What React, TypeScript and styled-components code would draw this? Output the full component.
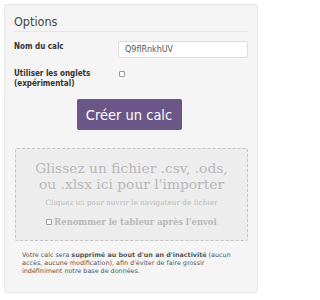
import React from 'react';
import styled, { createGlobalStyle } from 'styled-components';

const GlobalStyle = createGlobalStyle`
  html, body {
    margin: 0;
    padding: 0;
    background: #fff;
  }
  body {
    font-family: "DejaVu Sans Condensed", "DejaVu Sans", sans-serif;
    color: #333;
  }
`;

const Panel = styled.div`
  margin: 4px 5px 0 4px;
  width: 254px;
  box-sizing: border-box;
  background: #f5f5f5;
  border: 1px solid #e7e7e7;
  border-radius: 3px;
  padding: 9px 9px 17px 9px;
`;

const Title = styled.h2`
  margin: 0;
  font-size: 12.5px;
  font-weight: normal;
  color: #444;
  line-height: 15px;
  padding-bottom: 2px;
  border-bottom: 1px solid #e6e6e6;
`;

const Form = styled.div`
  display: flex;
  flex-direction: column;
  padding-top: 9px;
`;

const Row = styled.div<{ gap?: number }>`
  display: grid;
  grid-template-columns: 104px 1fr;
  align-items: start;
  margin-bottom: ${(p) => p.gap ?? 8}px;
`;

const Label = styled.label<{ top?: number }>`
  font-size: 8px;
  font-weight: bold;
  line-height: 10px;
  color: #333;
  padding-top: ${(p) => p.top ?? 0}px;
`;

const TextInput = styled.input`
  box-sizing: border-box;
  width: 130px;
  height: 17px;
  margin: 0;
  border: 1px solid #ddd;
  border-radius: 2px;
  background: #fff;
  font-family: "DejaVu Sans", sans-serif;
  font-size: 8px;
  color: #555;
  padding: 0 6px;
  outline: none;
`;

const Check = styled.input.attrs({ type: 'checkbox' })<{ m?: string }>`
  appearance: none;
  box-sizing: border-box;
  width: 6px;
  height: 6px;
  margin: ${(p) => p.m ?? '3px 0 0 1px'};
  border: 1px solid #999;
  border-radius: 1px;
  background: #fff;
`;

const ButtonRow = styled.div`
  display: flex;
  justify-content: center;
  margin: 0 0 18px 0;
  padding-right: 4px;
`;

const Button = styled.button`
  width: 105px;
  height: 31px;
  border: none;
  border-radius: 2px;
  background: #6b5688;
  color: #fff;
  font-family: "DejaVu Sans Condensed", "DejaVu Sans", sans-serif;
  font-size: 14.5px;
  padding: 0;
`;

const DropZone = styled.div`
  box-sizing: border-box;
  width: 233px;
  margin-left: 1px;
  height: 93px;
  border: 1px dashed #c4c4c4;
  border-radius: 2px;
  background: #ededed;
  display: flex;
  flex-direction: column;
  align-items: center;
  padding-top: 11px;
  font-family: "DejaVu Serif", serif;
  color: #b8b8b8;
`;

const DropTitle = styled.div`
  font-size: 13.8px;
  line-height: 16px;
  text-align: center;
`;

const DropHint = styled.div`
  font-size: 7.3px;
  line-height: 9px;
  margin-top: 6px;
`;

const RenameRow = styled.label`
  display: flex;
  align-items: center;
  gap: 2px;
  margin-top: 10px;
  font-size: 8.4px;
  font-weight: bold;
  line-height: 10px;
`;

const Notice = styled.p`
  margin: 10px 0 0 8px;
  width: 214px;
  font-family: "DejaVu Sans", sans-serif;
  font-size: 6.4px;
  line-height: 8px;
  color: #555;
`;

export default () => (
  <>
    <GlobalStyle />
    <Panel>
      <Title>Options</Title>
      <Form>
        <Row gap={10}>
          <Label top={1}>Nom du calc</Label>
          <TextInput defaultValue="Q9flRnkhUV" />
        </Row>
        <Row gap={10}>
          <Label top={1}>
            Utiliser les onglets
            <br />
            (expérimental)
          </Label>
          <Check />
        </Row>
        <ButtonRow>
          <Button>Créer un calc</Button>
        </ButtonRow>
      </Form>
      <DropZone>
        <DropTitle>
          Glissez un fichier .csv, .ods,
          <br />
          ou .xlsx ici pour l'importer
        </DropTitle>
        <DropHint>Cliquez ici pour ouvrir le navigateur de fichier</DropHint>
        <RenameRow>
          <Check m="0" />
          Renommer le tableur après l'envoi
        </RenameRow>
      </DropZone>
      <Notice>
        Votre calc sera <strong>supprimé au bout d'un an d'inactivité</strong> (aucun
        accès, aucune modification), afin d'éviter de faire grossir
        indéfiniment notre base de données.
      </Notice>
    </Panel>
  </>
);
